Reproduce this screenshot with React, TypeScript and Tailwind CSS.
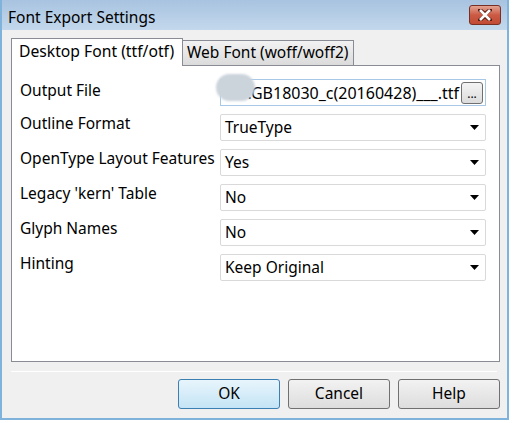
const rows = [
  { label: 'Outline Format', value: 'TrueType' },
  { label: 'OpenType Layout Features', value: 'Yes' },
  { label: "Legacy 'kern' Table", value: 'No' },
  { label: 'Glyph Names', value: 'No' },
  { label: 'Hinting', value: 'Keep Original' },
];

function Arrow() {
  return (
    <svg width="9" height="5" viewBox="0 0 9 5" className="shrink-0">
      <path d="M0 0 H9 L4.5 5 Z" fill="#000" />
    </svg>
  );
}

export default function App() {
  return (
    <div className="w-[513px] h-[423px] bg-white overflow-hidden" style={{ fontFamily: '"Noto Sans", "Open Sans", sans-serif' }}>
      <div className="w-[509px] h-[420px] flex flex-col border-x-[2px] border-b-[2px] border-[#7fb3dc] bg-[#f0f0f0]">
        {/* Title bar */}
        <div className="h-[30px] shrink-0 flex items-start justify-between bg-gradient-to-b from-[#a8c3e0] to-[#c3d8ec] pl-[6px] pr-[6px]">
          <span className="text-[15.5px] leading-[18px] mt-[8px] text-black">Font Export Settings</span>
          <div className="mt-[5px] w-[32px] h-[20px] rounded-[3px] border border-[#7a2f25] bg-gradient-to-b from-[#e3a393] via-[#cb5a44] to-[#c14a33] flex items-center justify-center">
            <svg width="14" height="12" viewBox="0 0 14 12">
              <path d="M2 1 L7 5 L12 1 M2 11 L7 7 L12 11" stroke="#5b1d12" strokeWidth="4" fill="none" strokeLinecap="square" />
              <path d="M2 1 L12 11 M12 1 L2 11" stroke="#fff" strokeWidth="2.6" fill="none" />
            </svg>
          </div>
        </div>

        <div className="flex-1 flex flex-col px-[9px] pt-[8px]">
          {/* Tabs */}
          <div className="flex items-end h-[27px] relative z-10">
            <div className="h-[28px] -mb-px w-[172px] border border-b-0 border-[#898c95] bg-white text-[15.7px] flex items-center pl-[7px] pb-[2px] whitespace-nowrap">
              Desktop Font (ttf/otf)
            </div>
            <div className="h-[25px] w-[171px] border border-l-0 border-b-0 border-[#898c95] bg-gradient-to-b from-[#f2f2f2] to-[#dbdbdb] text-[15.5px] flex items-center pl-[4px] whitespace-nowrap">
              Web Font (woff/woff2)
            </div>
          </div>

          {/* Panel */}
          <div className="h-[297px] w-[489px] border border-[#898c95] bg-white flex flex-col gap-[8px] pt-[13px] pl-[8px] pr-[13px]">
            <div className="flex items-start h-[27px]">
              <span className="w-[200px] text-[15.5px] leading-[20px] mt-[1px]">Output File</span>
              <div className="relative flex-1 h-[27px] border border-[#a7c8e6] flex items-center justify-end pr-[2px]">
                <span className="text-[16px] mr-[2px] whitespace-nowrap">.GB18030_c(20160428)___.ttf</span>
                <div className="w-[22px] h-[22px] rounded-[3px] border border-[#707070] bg-gradient-to-b from-[#f4f4f4] to-[#dcdcdc] flex items-end justify-center text-[12px] leading-[14px] pb-[2px]">...</div>
                <div className="absolute left-[-5px] top-[-6px] w-[39px] h-[27px] rounded-[14px] bg-[#cbd3db] blur-[1px]" />
              </div>
            </div>
            {rows.map((r) => (
              <div key={r.label} className="flex items-start h-[27px]">
                <span className="w-[200px] text-[15.5px] leading-[20px] -mt-[1px] whitespace-nowrap">{r.label}</span>
                <div className="flex-1 h-[27px] border border-[#d9d9d9] rounded-[2px] flex items-center justify-between pl-[4px] pr-[6px]">
                  <span className="text-[15.5px]">{r.value}</span>
                  <Arrow />
                </div>
              </div>
            ))}
          </div>

          {/* Separator */}
          <div className="mt-[9px] h-px w-[486px] bg-[#a0a0a0] border-b border-white" />

          {/* Buttons */}
          <div className="flex justify-end gap-[8px] mt-[7px] w-[489px]">
            <button className="w-[102px] h-[30px] rounded-[3px] border border-[#3c7fb1] bg-gradient-to-b from-[#e8f5fc] to-[#c4e4f5] text-[15.5px]">OK</button>
            <button className="w-[102px] h-[30px] rounded-[3px] border border-[#707070] bg-gradient-to-b from-[#f2f2f2] to-[#dddddd] text-[15.5px]">Cancel</button>
            <button className="w-[102px] h-[30px] rounded-[3px] border border-[#707070] bg-gradient-to-b from-[#f2f2f2] to-[#dddddd] text-[15.5px]">Help</button>
          </div>
        </div>
      </div>
    </div>
  );
}
